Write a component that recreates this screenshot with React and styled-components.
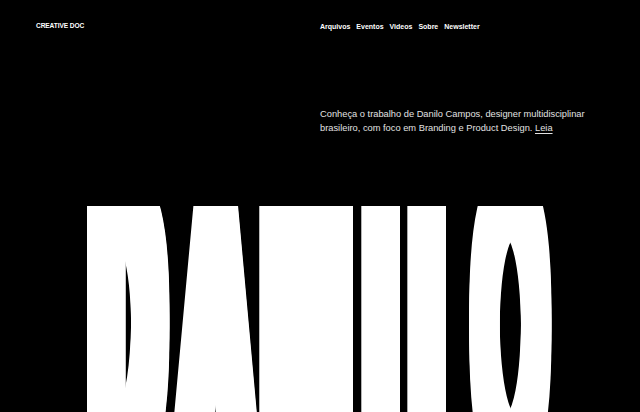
import React from 'react';
import styled, { createGlobalStyle } from 'styled-components';

const GlobalStyle = createGlobalStyle`
  html, body {
    margin: 0;
    padding: 0;
    background: #000;
  }
  body {
    font-family: "Liberation Sans", Arial, sans-serif;
    -webkit-font-smoothing: antialiased;
  }
`;

// copies of the glyph to its right, so the stems get as heavy as an ultra condensed face
const smear = len => {
  const steps = [];
  for (let x = 10; x < len; x += 10) steps.push(`${x}px 0`);
  steps.push(`${len}px 0`);
  return steps.join(', ');
};

const Page = styled.div`
  display: flex;
  flex-direction: column;
  width: 640px;
  height: 412px;
  overflow: hidden;
  background: #000;
  color: #fff;
  padding: 0 36px;
  box-sizing: border-box;
`;

const Top = styled.div`
  display: grid;
  grid-template-columns: 284px 1fr;
  row-gap: 55px;
`;

const Logo = styled.a`
  font-size: 6.6px;
  font-weight: 700;
  letter-spacing: -0.1px;
  line-height: 52px;
  color: #fff;
  text-decoration: none;
`;

const Nav = styled.nav`
  display: flex;
  align-items: center;
  gap: 6px;
  height: 52px;
`;

const NavLink = styled.a`
  font-size: 7px;
  font-weight: 700;
  color: #fff;
  text-decoration: none;
`;

const Intro = styled.p`
  grid-column: 2;
  margin: 0;
  font-size: 9.3px;
  line-height: 14px;
  color: #e2e2e2;
  max-width: 275px;
`;

const ReadMore = styled.a`
  color: #e2e2e2;
  text-decoration: underline;
  text-decoration-thickness: 0.5px;
  text-underline-offset: 2px;
`;

// the clip line is the cap line: letters are pushed up behind it so their tops come out flat
const TitleClip = styled.div`
  flex: 1;
  min-height: 0;
  margin-top: 71px;
  overflow: hidden;
`;

const Title = styled.h1`
  display: block;
  margin: -22px 0 0 44px;
  font-size: 391px;
  font-weight: 400;
  line-height: 0.8;
  white-space: nowrap;
  color: #fff;
  filter: drop-shadow(0 -10px 0 #fff) drop-shadow(0 -20px 0 #fff);
  transform: scaleX(0.226);
  transform-origin: 0 0;
`;

const Letter = styled.span`
  letter-spacing: ${p => p.$track}px;
  text-shadow: ${p => smear(p.$smear)};
`;

const links = ['Arquivos', 'Eventos', 'Videos', 'Sobre', 'Newsletter'];

const letters = [
  { ch: 'D', track: 121, smear: 132 },
  { ch: 'A', track: 99, smear: 132 },
  { ch: 'N', track: 165, smear: 194 },
  { ch: 'I', track: 99, smear: 132 },
  { ch: 'L', track: 68, smear: 132 },
  { ch: 'O', track: 0, smear: 97 },
];

export default function App() {
  return (
    <>
      <GlobalStyle />
      <Page>
        <Top>
          <Logo href="#">CREATIVE DOC</Logo>
          <Nav>
            {links.map(l => (
              <NavLink key={l} href="#">{l}</NavLink>
            ))}
          </Nav>
          <Intro>
            Conheça o trabalho de Danilo Campos, designer multidisciplinar brasileiro, com foco em
            Branding e Product Design. <ReadMore href="#">Leia</ReadMore>
          </Intro>
        </Top>
        <TitleClip>
          <Title aria-label="DANILO">
            {letters.map((l, i) => (
              <Letter key={i} $track={l.track} $smear={l.smear}>{l.ch}</Letter>
            ))}
          </Title>
        </TitleClip>
      </Page>
    </>
  );
}
